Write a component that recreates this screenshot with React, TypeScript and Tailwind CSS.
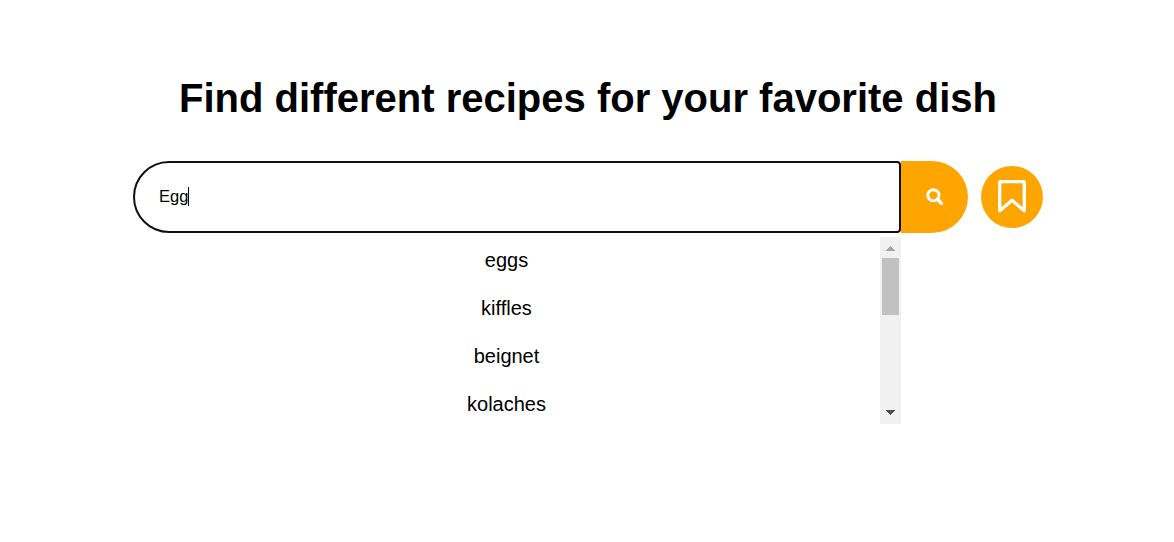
import React from "react";

const suggestions = ["eggs", "kiffles", "beignet", "kolaches"];

function SearchIcon() {
  return (
    <svg width="18" height="18" viewBox="0 0 18 18" fill="none" stroke="white">
      <circle cx="7.4" cy="7.3" r="5.6" strokeWidth="2.9" />
      <path d="M11.4 11.3L15.4 15.3" strokeWidth="3.4" strokeLinecap="round" />
    </svg>
  );
}

function BookmarkIcon() {
  return (
    <svg className="mb-0.5" width="28" height="33" viewBox="0 0 28 33" fill="none" stroke="white" strokeWidth="3.3" strokeLinejoin="round">
      <path d="M1.7 2.7Q1.7 1.7 2.7 1.7H25.3Q26.3 1.7 26.3 2.7V30.8L14 20.3L1.7 30.8Z" />
    </svg>
  );
}

function Scrollbar() {
  return (
    <div className="flex h-full w-[21px] shrink-0 flex-col items-center justify-between bg-[#f1f1f1]">
      <div className="flex flex-col items-center">
        <svg className="mt-[9px] h-[5px] w-[9px]" viewBox="0 0 9 5" shapeRendering="crispEdges">
          <path d="M0 5V4H1V3H2V2H3V1H4V0H5V1H6V2H7V3H8V4H9V5Z" fill="#a3a3a3" />
        </svg>
        <div className="mt-[7px] h-[57px] w-[17px] bg-[#c1c1c1]" />
      </div>
      <svg className="mb-[9px] h-[5px] w-[9px]" viewBox="0 0 9 5" shapeRendering="crispEdges">
        <path d="M0 0V1H1V2H2V3H3V4H4V5H5V4H6V3H7V2H8V1H9V0Z" fill="#505050" />
      </svg>
    </div>
  );
}

export default function App() {
  return (
    <main className="h-[542px] overflow-hidden bg-white pt-[74px] pl-[133px] font-['Liberation_Sans',Arial,sans-serif] text-black">
      <h1 className="w-[910px] text-center text-[40px] leading-[48px] font-bold whitespace-nowrap">
        Find different recipes for your favorite dish
      </h1>
      <div className="mt-[39px] flex h-[72px] w-[910px] items-center">
        <div className="flex h-[72px] w-[768px] items-center rounded-l-[36px] rounded-r-[4px] border-2 border-[#101010] pb-0.5 pl-6">
          <span className="text-[16.5px] leading-[18px]">Egg</span>
          <span className="h-[19px] w-px bg-black" />
        </div>
        <button aria-label="Search" className="flex h-[72px] w-[67px] items-center justify-center rounded-r-[36px] bg-[#ffa500]">
          <SearchIcon />
        </button>
        <button aria-label="Bookmarks" className="ml-[13px] flex size-[62px] items-center justify-center rounded-full bg-[#ffa500]">
          <BookmarkIcon />
        </button>
      </div>
      <div className="mt-1 flex h-[187px] w-[768px] overflow-hidden">
        <ul className="flex-1 text-center text-[20px]">
          {suggestions.map((name) => (
            <li key={name} className="h-12 leading-[46px]">{name}</li>
          ))}
        </ul>
        <Scrollbar />
      </div>
    </main>
  );
}
